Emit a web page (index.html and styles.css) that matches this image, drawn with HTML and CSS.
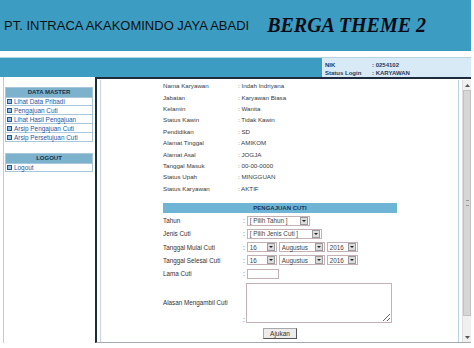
FILE: index.html
```html
<!DOCTYPE html>
<html lang="id">
<head>
  <meta charset="UTF-8">
  <title>Berga Theme 2 - Pengajuan Cuti</title>
  <link rel="stylesheet" href="styles.css">
</head>
<body>
<div class="page">

  <div class="header">
    <span class="company">PT. INTRACA AKAKOMINDO JAYA ABADI</span>
    <span class="theme">BERGA THEME 2</span>
  </div>
  <div class="strip"></div>

  <div class="userbar">
    <div class="userbar-fill"></div>
    <div class="userinfo">
      <span>NIK</span><span>: 0254102</span>
      <span>Status Login</span><span>: KARYAWAN</span>
    </div>
  </div>

  <div class="main">
    <div class="sidebar">
      <div class="menu-title">DATA MASTER</div>
      <div class="menu">
        <a href="#"><i class="bullet"></i>Lihat Data Pribadi</a>
        <a href="#"><i class="bullet"></i>Pengajuan Cuti</a>
        <a href="#"><i class="bullet"></i>Lihat Hasil Pengajuan</a>
        <a href="#"><i class="bullet"></i>Arsip Pengajuan Cuti</a>
        <a href="#"><i class="bullet"></i>Arsip Persetujuan Cuti</a>
      </div>
      <div class="menu-title logout-title">LOGOUT</div>
      <div class="menu">
        <a href="#"><i class="bullet"></i>Logout</a>
      </div>
    </div>

    <div class="frame">
      <div class="content">
        <div class="info">
          <span>Nama Karyawan</span><span>: Indah Indriyana</span>
          <span>Jabatan</span><span>: Karyawan Biasa</span>
          <span>Kelamin</span><span>: Wanita</span>
          <span>Status Kawin</span><span>: Tidak Kawin</span>
          <span>Pendidikan</span><span>: SD</span>
          <span>Alamat Tinggal</span><span>: AMIKOM</span>
          <span>Alamat Asal</span><span>: JOGJA</span>
          <span>Tanggal Masuk</span><span>: 00-00-0000</span>
          <span>Status Upah</span><span>: MINGGUAN</span>
          <span>Status Karyawan</span><span>: AKTIF</span>
        </div>

        <div class="form-title">PENGAJUAN CUTI</div>
        <div class="form">
          <span class="label">Tahun</span>
          <span class="field">:
            <span class="select w-tahun">[ Pilih Tahun ]<i class="arrow"></i></span>
          </span>

          <span class="label">Jenis Cuti</span>
          <span class="field">:
            <span class="select w-jenis">[ Pilih Jenis Cuti ]<i class="arrow"></i></span>
          </span>

          <span class="label">Tanggal Mulai Cuti</span>
          <span class="field">:
            <span class="select w-day">16<i class="arrow"></i></span>
            <span class="select w-month">Augustus<i class="arrow"></i></span>
            <span class="select w-year">2016<i class="arrow"></i></span>
          </span>

          <span class="label">Tanggal Selesai Cuti</span>
          <span class="field">:
            <span class="select w-day">16<i class="arrow"></i></span>
            <span class="select w-month">Augustus<i class="arrow"></i></span>
            <span class="select w-year">2016<i class="arrow"></i></span>
          </span>

          <span class="label">Lama Cuti</span>
          <span class="field">: <input class="text-input" type="text"></span>

          <span class="label tall">Alasan Mengambil Cuti</span>
          <span class="field tall bottom">: <textarea class="reason"></textarea></span>

          <div class="actions"><button type="button">Ajukan</button></div>
        </div>
      </div>

      <div class="scrollbar">
        <div class="sb-btn">
          <svg width="5" height="3" viewBox="0 0 5 3"><path d="M0 3L2.5 0L5 3Z" fill="#555"/></svg>
        </div>
        <div class="sb-thumb"><span class="grip"></span></div>
        <div class="sb-track"></div>
        <div class="sb-btn">
          <svg width="5" height="3" viewBox="0 0 5 3"><path d="M0 0L2.5 3L5 0Z" fill="#555"/></svg>
        </div>
      </div>
    </div>
  </div>

</div>
</body>
</html>
```

FILE: styles.css
```css
body {
  margin: 0;
  font-family: Tahoma, 'Liberation Sans', Arial, sans-serif;
  background-color: #fff;
  color: #333;
}

.page {
  width: 471px;
}

/* header */
.header {
  height: 51px;
  background-color: #3c9cc2;
  display: flex;
  align-items: center;
  padding-left: 4px;
}

.company {
  font-size: 13px;
  color: #111;
}

.theme {
  font-family: 'Liberation Serif', 'Times New Roman', serif;
  font-weight: bold;
  font-style: italic;
  font-size: 20px;
  margin-left: 18px;
  color: #0b0b16;
}

.strip {
  height: 6px;
  border-bottom: 1px solid #b7d3e2;
}

.userbar {
  display: flex;
  height: 19px;
}

.userbar-fill {
  flex: 1;
  background-color: #3c9cc2;
}

.userinfo {
  width: 146px;
  background-color: #d8eaf6;
  padding: 3px 0 0 3px;
  display: grid;
  grid-template-columns: 47px 1fr;
  grid-auto-rows: 8px;
  align-items: center;
  font-size: 6px;
  font-weight: bold;
  color: #1f3b63;
}

/* main area */
.main {
  display: flex;
  height: 266px;
}

.sidebar {
  width: 88px;
  margin-left: 3px;
  border-left: 1px solid #b9cfdc;
  padding: 10px 2px 0 1px;
}

.menu-title {
  height: 9px;
  line-height: 9px;
  background-color: #7db2cc;
  border: 1px solid #a9c7dc;
  border-bottom: none;
  text-align: center;
  font-size: 6px;
  font-weight: bold;
  color: #17324f;
}

.logout-title {
  margin-top: 11px;
}

.menu a {
  display: flex;
  align-items: center;
  gap: 2px;
  height: 8px;
  border: 1px solid #a9c7dc;
  border-top: none;
  padding-left: 1px;
  font-size: 6.4px;
  color: #2457a3;
  text-decoration: none;
  background-color: #fff;
}

.menu a:first-child {
  border-top: 1px solid #a9c7dc;
  height: 7px;
}

.bullet {
  width: 3px;
  height: 3px;
  border: 1px solid #1f5a96;
  background-color: #8ec1e6;
}

/* content frame */
.frame {
  flex: 1;
  display: flex;
  border-left: 2px solid #1d2c3c;
  border-top: 2px solid #1d2c3c;
  border-bottom: 1px solid #a4a9ad;
  padding: 1px 0 0 3px;
}

.content {
  flex: 1;
  border-left: 1px solid #c9d6e0;
  border-right: 1px solid #b5d3e6;
  padding-left: 62px;
}

.info {
  display: grid;
  grid-template-columns: 75px 1fr;
  grid-auto-rows: 11.4px;
  align-items: center;
  font-size: 6.2px;
  color: #3a3a3a;
}

.form-title {
  width: 234px;
  height: 10px;
  line-height: 10px;
  margin-top: 9px;
  background-color: #6db4d5;
  text-align: center;
  font-size: 6px;
  font-weight: bold;
  color: #1b3556;
}

.form {
  width: 234px;
  margin-top: 1px;
  display: grid;
  grid-template-columns: 80px 1fr;
  grid-auto-rows: minmax(13.3px, auto);
  align-items: center;
  font-size: 6.3px;
  color: #333;
}

.field {
  display: flex;
  align-items: center;
  gap: 1px;
}

.label.tall,
.field.tall {
  height: 44px;
}

.label.tall {
  display: flex;
  align-items: center;
}

.field.bottom {
  align-items: flex-end;
  padding: 3px 0 1px;
  box-sizing: border-box;
}

.select {
  display: inline-flex;
  align-items: center;
  height: 8px;
  border: 1px solid #c4b1b6;
  padding-left: 2px;
  margin-left: 1px;
  font-size: 6.3px;
  color: #444;
  background-color: #fff;
}

.arrow {
  width: 6px;
  height: 6px;
  margin-left: auto;
  margin-right: 1px;
  background-color: #dcdcdc;
  border: 1px solid #9a9a9a;
  position: relative;
}

.arrow::after {
  content: "";
  position: absolute;
  left: 1px;
  top: 2px;
  border-left: 2px solid transparent;
  border-right: 2px solid transparent;
  border-top: 2px solid #222;
}

.w-tahun { width: 59px; }
.w-jenis { width: 71px; }
.w-day { width: 26px; }
.w-month { width: 42px; }
.w-year { width: 27px; }

.text-input {
  width: 30px;
  height: 8px;
  padding: 0;
  margin: 0 0 0 1px;
  border: 1px solid #c4b1b6;
}

.reason {
  width: 144px;
  height: 38px;
  padding: 0;
  margin: 0;
  border: 1px solid #c4b1b6;
  resize: both;
  font-size: 6px;
}

.actions {
  grid-column: 1 / 3;
  display: flex;
  justify-content: center;
  padding-top: 4px;
}

.actions button {
  height: 11px;
  padding: 0 6px;
  font-family: Tahoma, 'Liberation Sans', Arial, sans-serif;
  font-size: 6.5px;
  color: #333;
  background-color: #ececec;
  border: 1px solid #a8a8a8;
  border-right-color: #555;
  border-bottom-color: #555;
  line-height: 9px;
}

/* fake scrollbar */
.scrollbar {
  width: 8px;
  margin-left: 3px;
  border-left: 1px solid #dedede;
  background-color: #f0f0f0;
  display: flex;
  flex-direction: column;
}

.sb-btn {
  height: 10px;
  display: flex;
  align-items: center;
  justify-content: center;
}

.sb-thumb {
  height: 226px;
  background-color: #d6d6d6;
  border: 1px solid #c2c2c2;
  box-sizing: border-box;
  display: flex;
  align-items: center;
  justify-content: center;
}

.grip {
  width: 3px;
  height: 4px;
  border-top: 1px solid #999;
  border-bottom: 1px solid #999;
}

.sb-track {
  flex: 1;
}
```
